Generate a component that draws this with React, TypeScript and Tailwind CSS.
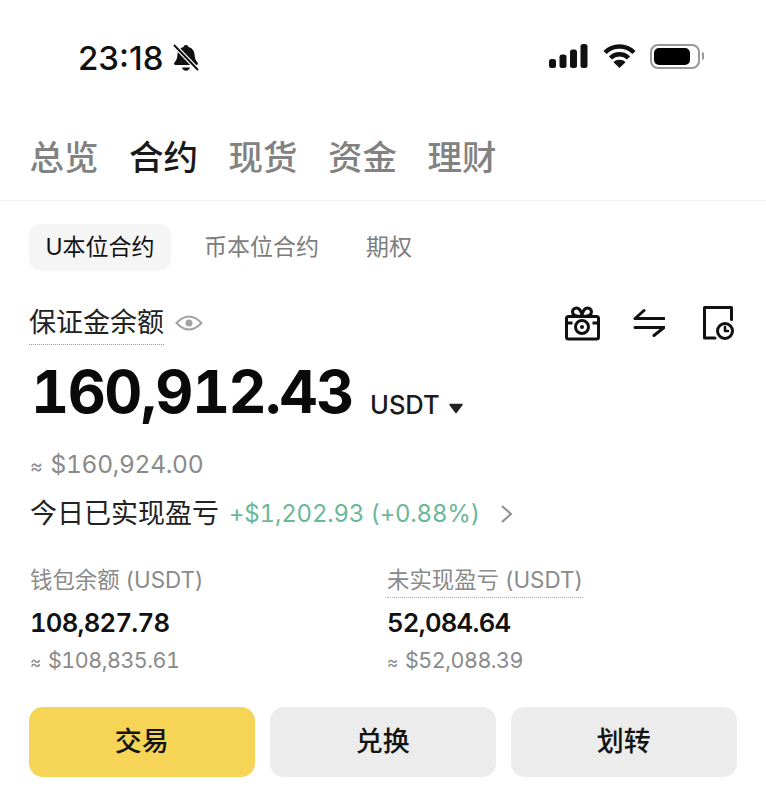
import React from "react";

const sans = "font-['Inter','Noto_Sans_CJK_SC',sans-serif]";

function StatusBar() {
  return (
    <div className="flex h-[100px] items-center justify-between pt-[16px] pl-[78px] pr-[62px]">
      <div className="flex items-center gap-[8px]">
        <span className="text-[33px] leading-none font-medium text-[#111]">23:18</span>
        <svg width="28" height="28" viewBox="0 0 28 28">
          <path d="M14 1c1.500 0 2.300.8 2.500 2 3.900 1 5.900 4 6.100 8 .2 3.500 1 5.500 3 7.600.7.800.3 2.400-1 2.400H3.400c-1.300 0-1.700-1.600-1-2.400 2-2.100 2.800-4.100 3-7.600.2-4 2.200-7 6.100-8 .2-1.200 1-2 2.500-2z" fill="#111" />
          <path d="M10 23.500h8c-.3 1.800-2 3.200-4 3.200s-3.700-1.400-4-3.200z" fill="#111" />
          <path d="M2 1l24 25" stroke="#fff" strokeWidth="4.500" />
          <path d="M2 1l24 25" stroke="#111" strokeWidth="2" />
        </svg>
      </div>
      <div className="-mt-[4px] flex items-center">
        <svg width="39" height="24" viewBox="0 0 39 24" fill="#111">
          <rect x="0" y="15" width="7" height="9" rx="2.500" />
          <rect x="10.500" y="10.500" width="7" height="13.500" rx="2.500" />
          <rect x="21" y="5.500" width="7" height="18.500" rx="2.500" />
          <rect x="31.500" y="0" width="7" height="24" rx="2.500" />
        </svg>
        <svg className="ml-[15px]" width="33" height="24" viewBox="0 0 33 24" fill="none" stroke="#111" strokeWidth="4.500">
          <path d="M2 8.500c8-8 21-8 29 0" />
          <path d="M7.500 14c5-5 13-5 18 0" />
          <path d="M16.500 24l-6-5.800c3.200-3.200 8.800-3.200 12 0z" fill="#111" stroke="none" />
        </svg>
        <div className="ml-[14px] flex items-center gap-[2px]">
          <div className="flex h-[25px] w-[50px] items-center rounded-[8px] border-2 border-[#999] p-[2px]">
            <div className="h-full w-[36px] rounded-[5px] bg-black" />
          </div>
          <div className="h-[8px] w-[2px] rounded-r-full bg-[#999]" />
        </div>
      </div>
    </div>
  );
}

function Tabs() {
  const tabs = ["总览", "合约", "现货", "资金", "理财"];
  return (
    <div className="flex h-[101px] items-center gap-[30.500px] border-b border-[#f0f0f0] pt-[17px] pl-[29.500px]">
      {tabs.map((t) => (
        <span
          key={t}
          className={`text-[34.500px] leading-none font-medium ${t === "合约" ? "text-[#1a1a1a]" : "text-[#828282]"}`}
        >
          {t}
        </span>
      ))}
    </div>
  );
}

function SubTabs() {
  return (
    <div className="mt-[23px] ml-[29px] flex items-center text-[23px] text-[#7d7d7d]">
      <div className="flex h-[47px] w-[142px] items-center justify-center rounded-[12px] bg-[#f5f5f5] text-[#111]">
        U本位合约
      </div>
      <span className="ml-[33px]">币本位合约</span>
      <span className="ml-[47px]">期权</span>
    </div>
  );
}

function Approx({ value, className }: { value: string; className: string }) {
  return (
    <div className={`flex items-baseline tabular-nums text-[#8a8a8a] ${className}`}>
      <span className="w-[1.050em] text-[0.8em] leading-none">≈</span>
      <span>{value}</span>
    </div>
  );
}

function Balance() {
  return (
    <div className="px-[30px]">
      <div className="mt-[30px] flex items-center justify-between">
        <div className="-ml-[1px] flex items-start gap-[11px]">
          <span className="border-b border-dotted border-[#999] pt-[3px] pb-[2px] text-[27px] leading-[38px] text-[#222]">
            保证金余额
          </span>
          <svg className="mt-[10px]" width="28" height="24" viewBox="0 0 28 24" fill="none">
            <path d="M1.500 12Q14-1 26.500 12 14 25 1.500 12z" stroke="#a3a3a3" strokeWidth="2" />
            <circle cx="14" cy="12" r="3.500" fill="#a3a3a3" />
          </svg>
        </div>
        <div className="flex items-center">
          <svg width="36" height="36" viewBox="0 0 36 36" fill="none" stroke="#111" strokeWidth="3" strokeLinejoin="round">
            <rect x="2.500" y="11.500" width="32" height="22.500" rx="2" />
            <path d="M2.500 18h6M28.500 18h6" />
            <path d="M18 11.500c-5 0-9.500-.5-9.500-4.500 0-2.300 1.700-4 3.800-4 3.200 0 5.700 4 5.700 8.500zM18 11.500c5 0 9.500-.5 9.500-4.500 0-2.300-1.700-4-3.800-4-3.200 0-5.700 4-5.700 8.500z" />
            <circle cx="18" cy="22" r="6.500" fill="#fff" />
            <circle cx="18" cy="22" r="2" fill="#111" stroke="none" />
          </svg>
          <svg className="ml-[33px]" width="32" height="30" viewBox="0 0 32 30" fill="none" stroke="#111" strokeWidth="3" strokeLinecap="round" strokeLinejoin="round">
            <path d="M2 10.500h29M2 10.500L11 2.500" />
            <path d="M31 19.500H2M31 19.500L21 27.500" />
          </svg>
          <svg className="ml-[37px]" width="34" height="36" viewBox="0 0 34 36" fill="none" stroke="#111" strokeWidth="3" strokeLinecap="round" strokeLinejoin="round">
            <path d="M13 33H2.500V2.500h27v12" />
            <circle cx="23" cy="26" r="7.500" />
            <path d="M23 22v4h3" strokeWidth="2.500" />
          </svg>
        </div>
      </div>

      <div className="mt-[4px] flex items-end">
        <span className="ml-[1px] w-[339px] text-[59px] leading-[86px] font-bold tracking-[-1.500px] tabular-nums text-[#0a0a0a]">160,912.43</span>
        <span className="mb-[14px] text-[25.500px] leading-[32px] font-medium text-[#1a1a1a]">USDT</span>
        <svg className="mb-[21px] ml-[9px]" width="14" height="11" viewBox="0 0 14 11">
          <path d="M1 1.500h12L7 9.500z" fill="#222" stroke="#222" strokeWidth="1.500" strokeLinejoin="round" />
        </svg>
      </div>

      <Approx value="$160,924.00" className="mt-[12px] text-[24.500px] leading-[34px] tracking-[-0.300px]" />

      <div className="mt-[14px] flex items-center">
        <span className="text-[27px] leading-[38px] text-[#222]">今日已实现盈亏</span>
        <span className="ml-[10px] text-[24px] leading-[38px] tracking-[-0.200px] whitespace-nowrap tabular-nums text-[#6bb896]">+$1,202.93 (+0.88%)</span>
        <svg className="ml-[20px]" width="13" height="20" viewBox="0 0 13 20" fill="none" stroke="#8f8f8f" strokeWidth="2">
          <path d="M2 2l9 8-9 8" />
        </svg>
      </div>
    </div>
  );
}

function Stat({ label, value, approx, dotted }: { label: string; value: string; approx: string; dotted?: boolean }) {
  return (
    <div className="w-[357px] shrink-0">
      <span className={`inline-block text-[22.400px] leading-[30px] text-[#8a8a8a] ${dotted ? "border-b border-dotted border-[#aaa] pb-[2px]" : "pb-[3px]"}`}>
        {label}
      </span>
      <div className="mt-[9px] text-[25.700px] leading-[32px] font-semibold tracking-[-0.750px] tabular-nums text-[#111]">{value}</div>
      <Approx value={approx} className="mt-[6px] text-[21.500px] leading-[30px] tracking-[-0.500px]" />
    </div>
  );
}

function Stats() {
  return (
    <div className="mt-[32px] flex px-[30px]">
      <Stat label="钱包余额 (USDT)" value="108,827.78" approx="$108,835.61" />
      <Stat label="未实现盈亏 (USDT)" value="52,084.64" approx="$52,088.39" dotted />
    </div>
  );
}

function Actions() {
  const base = "flex h-[70px] w-[225.500px] items-center justify-center rounded-[14px] pt-[1px] text-[27px] font-medium text-[#141414]";
  return (
    <div className="mt-[32px] ml-[29px] flex gap-[15.500px]">
      <button className={`${base} bg-[#f5d456]`}>交易</button>
      <button className={`${base} bg-[#ececec]`}>兑换</button>
      <button className={`${base} bg-[#ececec]`}>划转</button>
    </div>
  );
}

export default function App() {
  return (
    <div className={`h-[800px] w-[766px] overflow-hidden bg-white ${sans}`}>
      <StatusBar />
      <Tabs />
      <SubTabs />
      <Balance />
      <Stats />
      <Actions />
    </div>
  );
}
